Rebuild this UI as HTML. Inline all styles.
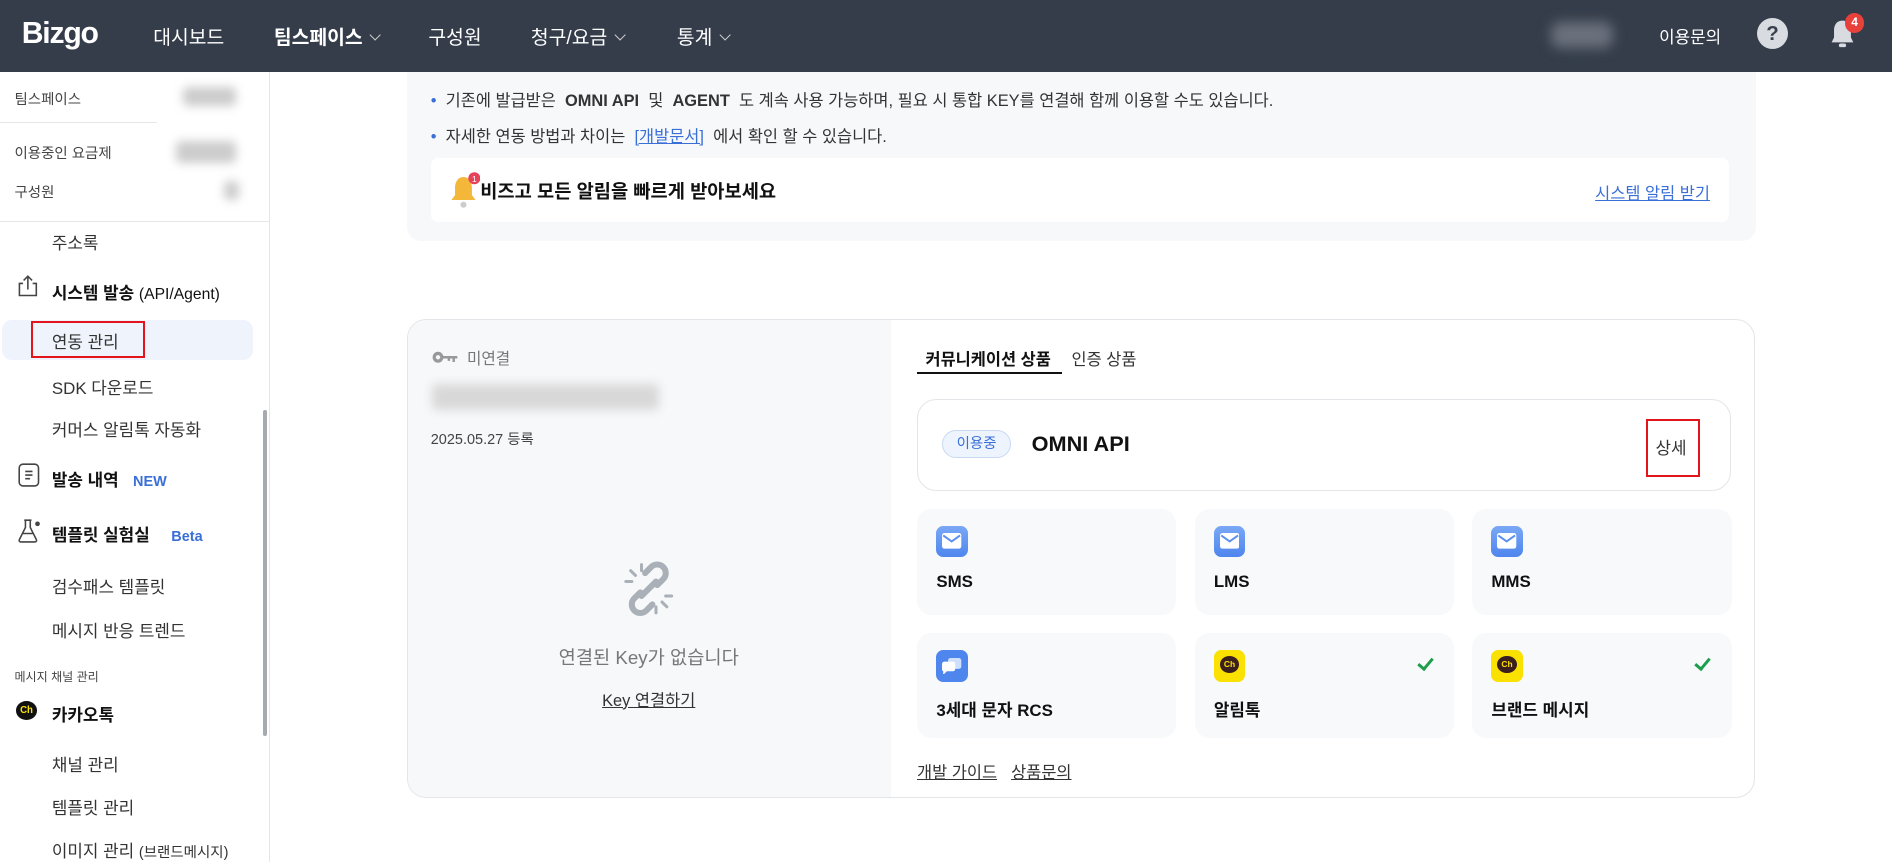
<!DOCTYPE html>
<html><head><meta charset="utf-8">
<style>
html,body{margin:0;padding:0;background:#fff;overflow:hidden}
body{width:1892px;height:862px}
#w{position:relative;width:1568px;height:714px;zoom:1.20663;font-family:"Liberation Sans","Noto Sans CJK KR",sans-serif;color:#222}
.a{position:absolute;white-space:nowrap}
#hd{position:absolute;left:0;top:0;width:1568px;height:60px;background:#353d4b}
.nav{position:absolute;top:18px;color:#fff;font-size:16px}
.chev{display:inline-block;width:6px;height:6px;border-right:1.3px solid #ccc;border-bottom:1.3px solid #ccc;transform:rotate(45deg);margin-left:7px;position:relative;top:-4px}
#sb{position:absolute;left:0;top:60px;width:223px;height:654px;border-right:1px solid #e6e6e6}
.s1{font-size:12px;color:#444}
.s2{font-size:14px;color:#333}
.s3{font-size:14px;font-weight:bold;color:#111}
.blur{background:#ccc;filter:blur(4px);border-radius:4px}
.card{position:absolute;background:#f7f9fb;border-radius:12px}
.ic{position:absolute;left:16px;top:14px;width:26px;height:26px;border-radius:6px;background:linear-gradient(#7aa8f5,#4f86ee)}
.ic svg{position:absolute;left:5px;top:6px}
.lb{position:absolute;left:16px;top:52px;font-size:14px;font-weight:bold;color:#111}
.ck{position:absolute;right:20px;top:18px;width:5px;height:10px;border-right:3px solid #1e9e4c;border-bottom:3px solid #1e9e4c;transform:rotate(40deg)}
.ch{position:absolute;left:16px;top:14px;width:26px;height:26px;border-radius:6px;background:#fae100}
.chb{position:absolute;left:5px;top:5px;width:16px;height:14px;border-radius:50%;background:#3b1e1e;color:#fae100;font-size:7px;font-weight:bold;text-align:center;line-height:14px}
</style></head><body><div id="w">
<div id="hd">
<div class="a" style="left:18px;top:14px;color:#fff;font-size:25px;font-weight:bold;letter-spacing:-1px">Bizgo</div>
<div class="nav" style="left:127px">대시보드</div>
<div class="nav" style="left:227px;font-weight:bold">팀스페이스<span class="chev"></span></div>
<div class="nav" style="left:355px">구성원</div>
<div class="nav" style="left:440px">청구/요금<span class="chev"></span></div>
<div class="nav" style="left:561px">통계<span class="chev"></span></div>
<div class="a" style="left:1285px;top:18px;width:52px;height:22px;background:#6a717c;filter:blur(5px);border-radius:8px"></div>
<div class="nav" style="left:1375px;top:19px;font-size:14px">이용문의</div>
<div class="a" style="left:1456px;top:15px;width:26px;height:26px;border-radius:50%;background:#d8dbe0;color:#3a414d;font-weight:bold;font-size:17px;text-align:center;line-height:26px">?</div>
<svg class="a" style="left:1515px;top:14px" width="24" height="30" viewBox="0 0 24 30"><path d="M12 3c-5 0-7 4-7 8v6l-2 4h18l-2-4v-6c0-4-2-8-7-8z" fill="#d8dbe0"/><rect x="9" y="22" width="6" height="3" rx="1.5" fill="#d8dbe0"/></svg>
<div class="a" style="left:1529px;top:11px;width:16px;height:16px;border-radius:50%;background:#e8413c;color:#fff;font-size:10px;font-weight:bold;text-align:center;line-height:16px">4</div>
</div>

<div id="sb">
<div class="a s1" style="left:12px;top:13px">팀스페이스</div>
<div class="a blur" style="left:152px;top:12px;width:44px;height:16px"></div>
<div class="a" style="left:0;top:41px;width:130px;height:1px;background:#e6e6e6"></div>
<div class="a s1" style="left:12px;top:58px">이용중인 요금제</div>
<div class="a blur" style="left:146px;top:57px;width:50px;height:18px"></div>
<div class="a s1" style="left:12px;top:90px">구성원</div>
<div class="a blur" style="left:186px;top:90px;width:12px;height:16px"></div>
<div class="a" style="left:0;top:123px;width:223px;height:1px;background:#e6e6e6"></div>
<div class="a s2" style="left:43px;top:130px">주소록</div>
<svg class="a" style="left:14px;top:168px" width="18" height="18" viewBox="0 0 18 18" fill="none" stroke="#444" stroke-width="1.3"><path d="M5 7H2v10h14V7h-3M9 12V1M5.5 4.5L9 1l3.5 3.5"/></svg>
<div class="a s3" style="left:43px;top:171px">시스템 발송 <span style="font-weight:normal;font-size:13px">(API/Agent)</span></div>
<div class="a" style="left:2px;top:205px;width:208px;height:33px;background:#eef3fc;border-radius:8px"></div>
<div class="a" style="left:26px;top:206px;width:91px;height:27px;border:2px solid #e3141b"></div>
<div class="a s2" style="left:43px;top:212px">연동 관리</div>
<div class="a s2" style="left:43px;top:250px">SDK 다운로드</div>
<div class="a s2" style="left:43px;top:285px">커머스 알림톡 자동화</div>
<svg class="a" style="left:15px;top:324px" width="18" height="20" viewBox="0 0 18 20" fill="none" stroke="#444" stroke-width="1.3"><rect x="1" y="1" width="16" height="18" rx="3"/><path d="M6 7h6M6 10h6M6 13h4"/></svg>
<div class="a s3" style="left:43px;top:326px">발송 내역 <span style="color:#3a6fd8;font-size:12px;margin-left:8px">NEW</span></div>
<svg class="a" style="left:14px;top:370px" width="20" height="20" viewBox="0 0 20 20" fill="none" stroke="#444" stroke-width="1.3"><path d="M6 1h6M7 1v6L2 17c-.5 1 0 2 1 2h12c1 0 1.5-1 1-2L11 7V1M5 12h8"/><circle cx="17" cy="4" r="1.3" fill="#444"/></svg>
<div class="a s3" style="left:43px;top:372px">템플릿 실험실 <span style="color:#3a6fd8;font-size:12px;margin-left:14px">Beta</span></div>
<div class="a s2" style="left:43px;top:415px">검수패스 템플릿</div>
<div class="a s2" style="left:43px;top:451px">메시지 반응 트렌드</div>
<div class="a" style="left:12px;top:494px;font-size:10px;color:#444">메시지 채널 관리</div>
<div class="a" style="left:13px;top:521px;width:18px;height:16px;border-radius:50%;background:#111;color:#fae100;font-size:8px;font-weight:bold;text-align:center;line-height:16px">Ch</div>
<div class="a s3" style="left:43px;top:521px">카카오톡</div>
<div class="a s2" style="left:43px;top:562px">채널 관리</div>
<div class="a s2" style="left:43px;top:598px">템플릿 관리</div>
<div class="a s2" style="left:43px;top:634px">이미지 관리 <span style="font-size:12px">(브랜드메시지)</span></div>
<div class="a" style="left:218px;top:280px;width:3px;height:270px;background:#a6a9ad;border-radius:2px"></div>
</div>

<div class="a" style="left:337px;top:60px;width:1118px;height:140px;background:#f7f8fa;border-radius:0 0 12px 12px"></div>
<div class="a" style="left:357px;top:72px;font-size:13.6px;color:#333"><span style="color:#3a6fd8">•</span>&nbsp; 기존에 발급받은 &nbsp;<b>OMNI API</b>&nbsp; 및 &nbsp;<b>AGENT</b>&nbsp; 도 계속 사용 가능하며, 필요 시 통합 KEY를 연결해 함께 이용할 수도 있습니다.</div>
<div class="a" style="left:357px;top:102px;font-size:13.6px;color:#333"><span style="color:#3a6fd8">•</span>&nbsp; 자세한 연동 방법과 차이는 &nbsp;<span style="color:#3a6fd8;text-decoration:underline">[개발문서]</span>&nbsp; 에서 확인 할 수 있습니다.</div>
<div class="a" style="left:357px;top:131px;width:1076px;height:53px;background:#fff;border-radius:6px"></div>
<svg class="a" style="left:372px;top:142px" width="26" height="32" viewBox="0 0 26 32"><path d="M12 5c-5 0-7 5-7 9v6l-3 4h20l-3-4v-6c0-4-2-9-7-9z" fill="#f3b73a"/><circle cx="12" cy="28" r="2.5" fill="#ccc"/><circle cx="21" cy="6" r="5" fill="#e8415a"/><text x="21" y="9" font-size="7" fill="#fff" text-anchor="middle" font-family="Liberation Sans">1</text></svg>
<div class="a" style="left:398px;top:147px;font-size:15.5px;font-weight:bold;color:#111">비즈고 모든 알림을 빠르게 받아보세요</div>
<div class="a" style="left:1322px;top:149px;font-size:13.6px;color:#3a6fd8;text-decoration:underline">시스템 알림 받기</div>

<div class="a" style="left:337px;top:264px;width:1116px;height:396px;border:1px solid #e3e5e8;border-radius:16px;overflow:hidden">
<div class="a" style="left:0;top:0;width:401px;height:396px;background:#f7f8fa"></div>
</div>
<svg class="a" style="left:358px;top:290px" width="22" height="12" viewBox="0 0 22 12"><circle cx="5" cy="6" r="4.5" fill="#999"/><circle cx="5" cy="6" r="1.8" fill="#f7f8fa"/><path d="M9 5h12v2h-2v3h-2V7h-2v2h-2V7H9z" fill="#999"/></svg>
<div class="a" style="left:387px;top:287px;font-size:13px;color:#777">미연결</div>
<div class="a blur" style="left:358px;top:318px;width:188px;height:22px;background:#d8d8d8"></div>
<div class="a" style="left:357px;top:355px;font-size:12px;color:#444">2025.05.27 등록</div>
<svg class="a" style="left:515px;top:465px" width="46" height="46" viewBox="0 0 46 46" fill="none" stroke="#aab0b8" stroke-width="5" stroke-linecap="round"><path d="M20 10l5-5a7 7 0 0110 10l-5 5M26 36l-5 5a7 7 0 01-10-10l5-5M17 29l12-12"/><path d="M8 8l4 4M4 17h5M17 3v5M38 38l-4-4M42 29h-5M29 43v-5" stroke-width="2.5"/></svg>
<div class="a" style="left:463px;top:533px;font-size:15.5px;color:#777">연결된 Key가 없습니다</div>
<div class="a" style="left:499px;top:569px;font-size:13.6px;color:#333;text-decoration:underline">Key 연결하기</div>

<div class="a" style="left:767px;top:287px;font-size:13.6px;font-weight:bold;color:#111">커뮤니케이션 상품</div>
<div class="a" style="left:760px;top:308px;width:120px;height:2px;background:#111"></div>
<div class="a" style="left:888px;top:287px;font-size:13.6px;color:#333">인증 상품</div>
<div class="a" style="left:760px;top:331px;width:673px;height:74px;border:1px solid #e3e5e8;border-radius:16px"></div>
<div class="a" style="left:781px;top:356px;width:55px;height:22px;border:1px solid #c9d9f3;background:#eef4fd;border-radius:12px;font-size:12px;color:#3a6fd8;text-align:center;line-height:22px">이용중</div>
<div class="a" style="left:855px;top:357px;font-size:18px;font-weight:bold;color:#111">OMNI API</div>
<div class="a" style="left:1364px;top:347px;width:45px;height:48px;border:2px solid #e3141b;box-sizing:border-box"></div>
<div class="a" style="left:1372px;top:360px;font-size:14px;color:#333">상세</div>

<div class="card" style="left:760px;top:422px;width:215px;height:88px"><div class="ic"><svg width="16" height="13" viewBox="0 0 16 13"><rect width="16" height="13" rx="2" fill="#fff"/><path d="M1 2l7 5 7-5" fill="none" stroke="#5b8ff0" stroke-width="1.6"/></svg></div><div class="lb">SMS</div></div>
<div class="card" style="left:990px;top:422px;width:215px;height:88px"><div class="ic"><svg width="16" height="13" viewBox="0 0 16 13"><rect width="16" height="13" rx="2" fill="#fff"/><path d="M1 2l7 5 7-5" fill="none" stroke="#5b8ff0" stroke-width="1.6"/></svg></div><div class="lb">LMS</div></div>
<div class="card" style="left:1220px;top:422px;width:215px;height:88px"><div class="ic"><svg width="16" height="13" viewBox="0 0 16 13"><rect width="16" height="13" rx="2" fill="#fff"/><path d="M1 2l7 5 7-5" fill="none" stroke="#5b8ff0" stroke-width="1.6"/></svg></div><div class="lb">MMS</div></div>
<div class="card" style="left:760px;top:525px;width:215px;height:87px"><div class="ic" style="background:#4f86ee"><svg width="16" height="14" viewBox="0 0 16 14"><rect x="5" y="0" width="11" height="9" rx="2" fill="#cfe0ff"/><path d="M0 5a2 2 0 012-2h7a2 2 0 012 2v4a2 2 0 01-2 2H4l-3 3v-3a2 2 0 01-1-2z" fill="#fff"/></svg></div><div class="lb">3세대 문자 RCS</div></div>
<div class="card" style="left:990px;top:525px;width:215px;height:87px"><div class="ch"><div class="chb">Ch</div></div><div class="ck"></div><div class="lb">알림톡</div></div>
<div class="card" style="left:1220px;top:525px;width:215px;height:87px"><div class="ch"><div class="chb">Ch</div></div><div class="ck"></div><div class="lb">브랜드 메시지</div></div>
<div class="a" style="left:760px;top:629px;font-size:13.6px;color:#333;text-decoration:underline">개발 가이드</div>
<div class="a" style="left:838px;top:629px;font-size:13.6px;color:#333;text-decoration:underline">상품문의</div>
</div></body></html>
